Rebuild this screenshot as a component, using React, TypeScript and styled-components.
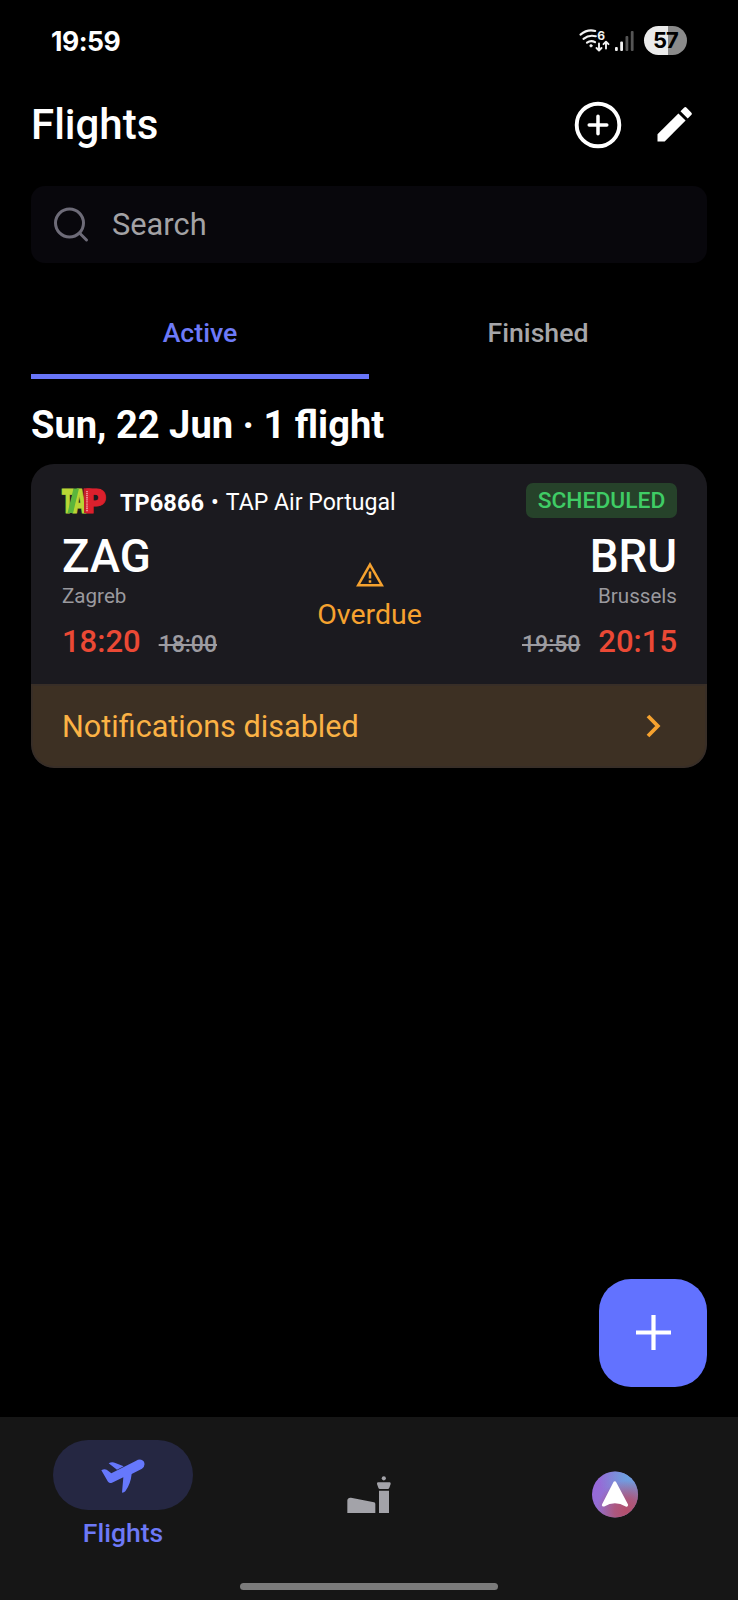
import React from "react";
import styled, { createGlobalStyle } from "styled-components";

const GlobalStyle = createGlobalStyle`
  *, *::before, *::after { box-sizing: border-box; }
  body { margin: 0; background: #000; }
  svg { display: block; flex: none; }
  button { border: 0; padding: 0; background: none; font: inherit; color: inherit; }
`;

const Screen = styled.div`
  position: relative;
  display: flex;
  flex-direction: column;
  width: 738px;
  height: 1600px;
  background: #000;
  color: #fff;
  font-family: Roboto, "Liberation Sans", sans-serif;
  overflow: hidden;
`;

const StatusBar = styled.header`
  display: flex;
  align-items: center;
  justify-content: space-between;
  height: 81px;
  padding: 0 51px 0 51px;
`;

const Clock = styled.time`
  font: 650 26.5px/32px Inter, sans-serif;
  letter-spacing: -0.5px;
`;

const StatusIcons = styled.div`
  display: flex;
  align-items: center;
  gap: 5px;
`;

const Battery = styled.div`
  width: 43px;
  height: 29px;
  margin-left: 5px;
  border-radius: 15px;
  background: linear-gradient(90deg, #ebebeb 0 56%, #8b8b8b 56%);
  color: #000;
  font: 700 22px/29px Inter, sans-serif;
  letter-spacing: -1px;
  text-align: center;
`;

const TitleBar = styled.div`
  display: flex;
  align-items: center;
  justify-content: space-between;
  height: 87px;
  margin-bottom: 18px;
  padding: 0 45px 0 31px;
`;

const Title = styled.h1`
  margin: 0;
  font-size: 42px;
  font-weight: 500;
  line-height: 50px;
`;

const Actions = styled.div`
  display: flex;
  align-items: center;
  gap: 35px;
`;

const SearchBox = styled.div`
  display: flex;
  align-items: center;
  gap: 21px;
  height: 77px;
  margin: 0 31px;
  padding-left: 22px;
  border-radius: 14px;
  background: #08070c;
  color: #a3a2a5;
  font-size: 30.8px;
`;

const Tabs = styled.div`
  display: flex;
  height: 88px;
  margin: 28px 31px 0;
`;

const Tab = styled.button<{ $active?: boolean }>`
  flex: 1;
  border-bottom: 5px solid ${(p) => (p.$active ? "#6875f8" : "transparent")};
  color: ${(p) => (p.$active ? "#6d7af8" : "#a6a6a9")};
  font-size: 26.7px;
  font-weight: 500;
  line-height: 32px;
`;

const DayHeading = styled.h2`
  margin: 7px 31px 0;
  font-size: 38.1px;
  font-weight: 700;
  line-height: 78px;
  white-space: nowrap;
`;

const Card = styled.article`
  margin: 0 31px;
  border-radius: 23px;
  background: #1b1a1f;
  overflow: hidden;
`;

const CardBody = styled.div`
  height: 220px;
  padding: 19px 30px 0 31px;
`;

const AirlineRow = styled.div`
  display: flex;
  height: 35px;
  margin-bottom: 16px;
`;

const Airline = styled.div`
  display: flex;
  flex: 1;
  gap: 7px;
  margin-left: 14px;
  padding-top: 5px;
  font-size: 23.1px;
  line-height: 30px;
  white-space: nowrap;

  b {
    font-size: 23.6px;
  }
`;

const Badge = styled.span`
  width: 151px;
  border-radius: 7px;
  background: #26422a;
  color: #3fcc65;
  font-size: 22.8px;
  font-weight: 500;
  line-height: 36px;
  text-align: center;
`;

const Route = styled.div`
  display: grid;
  grid-template-columns: 1fr 160px 1fr;
`;

const Stop = styled.div<{ $end?: boolean }>`
  display: flex;
  flex-direction: column;
  align-items: ${(p) => (p.$end ? "flex-end" : "flex-start")};
`;

const Code = styled.strong`
  font-size: 45.6px;
  font-weight: 500;
  line-height: 46px;
`;

const City = styled.span`
  margin-top: 1px;
  color: #9a999e;
  font-size: 20.6px;
  line-height: 31px;
`;

const Times = styled.div<{ $end?: boolean }>`
  display: flex;
  flex-direction: ${(p) => (p.$end ? "row-reverse" : "row")};
  align-items: baseline;
  gap: 18px;
  margin-top: 10px;
  line-height: 40px;
`;

const NewTime = styled.span`
  color: #eb4935;
  font-size: 31px;
  font-weight: 500;
`;

const OldTime = styled.s`
  color: #9d9ca1;
  font-size: 23px;
  font-weight: 500;
  text-decoration-thickness: 2px;
`;

const Progress = styled.div`
  display: flex;
  flex-direction: column;
  align-items: center;
  padding-top: 28px;
  color: #f6a22f;
  font-size: 28.5px;
  line-height: 37px;
`;

const WarningSlot = styled.div`
  height: 34px;
`;

const Notice = styled.button`
  display: flex;
  align-items: center;
  justify-content: space-between;
  width: 100%;
  height: 84px;
  padding: 0 44px 0 29px;
  border: 2px solid #382e27;
  border-radius: 0 0 23px 23px;
  background: #3d3023;
  color: #fbb245;
  font-size: 30.6px;
`;

const Fab = styled.button`
  position: absolute;
  right: 31px;
  bottom: 213px;
  display: grid;
  place-items: center;
  width: 108px;
  height: 108px;
  padding-bottom: 1px;
  border-radius: 32px;
  background: #6272ff;
`;

const BottomNav = styled.nav`
  display: flex;
  flex-direction: column;
  align-items: center;
  height: 183px;
  margin-top: auto;
  background: #161616;
`;

const NavItems = styled.div`
  display: grid;
  grid-template-columns: repeat(3, 1fr);
  width: 100%;
  height: 155px;
`;

const NavItem = styled.button`
  display: flex;
  flex-direction: column;
  align-items: center;
  justify-content: center;
  color: #6d79f7;
  font-size: 26.5px;
  font-weight: 500;
  line-height: 36px;
`;

const Pill = styled.span`
  display: grid;
  place-items: center;
  width: 140px;
  height: 70px;
  margin-top: 1px;
  margin-bottom: 5px;
  padding-top: 2px;
  border-radius: 35px;
  background: #252742;
`;

const HomeIndicator = styled.div`
  width: 258px;
  height: 7px;
  margin-top: 11px;
  border-radius: 4px;
  background: #7b7b7b;
`;

const LogoSlot = styled.div`
  height: 44px;
  margin-top: -4px;

  svg {
    overflow: visible;
  }
`;

const WifiIcon = () => (
  <svg width="31" height="26" viewBox="0 0 31 26" fill="none" stroke="#f2f2f2" strokeWidth="2.1" strokeLinecap="round" strokeLinejoin="round">
    <path d="M1.500 6.600Q8.500 .8 16.200 3M4.500 10.800Q10 6.500 16.800 8.300M8 14.600Q12 11.800 16 14.200" />
    <circle cx="12" cy="17.800" r="1.300" fill="#f2f2f2" strokeWidth=".5" />
    <path d="M20 15.500V22M17.500 20l2.500 2.500 2.500-2.500M27 20.500V14M24.500 16.200L27 13.700l2.500 2.500" strokeWidth="1.900" />
    <text x="18.300" y="11.500" fill="#f2f2f2" stroke="none" fontFamily="Inter, sans-serif" fontWeight="700" fontSize="12">6</text>
  </svg>
);

const SignalIcon = () => (
  <svg width="19" height="20" viewBox="0 0 19 20" fill="#f2f2f2">
    <rect x="0" y="16" width="2.800" height="4" rx="1" />
    <rect x="5.200" y="10.500" width="2.800" height="9.500" rx="1" />
    <rect x="10.500" y="5" width="2.800" height="15" rx="1" fill="#555" />
    <rect x="15.800" y="0" width="2.800" height="20" rx="1" fill="#555" />
  </svg>
);

const AddCircleIcon = () => (
  <svg width="48" height="48" viewBox="0 0 48 48" fill="none" stroke="#fff" strokeLinecap="round">
    <circle cx="24" cy="24" r="21.300" strokeWidth="3.900" />
    <path d="M24 15.200v17.600M15.200 24h17.600" strokeWidth="3.500" />
  </svg>
);

const PencilIcon = () => (
  <svg width="36" height="36" viewBox="0 0 36 36" fill="#fff">
    <path d="M.5 34.500v-7.200L21.400 6.400l7.200 7.200L7.700 34.500z" />
    <path d="M23.500 4.300l3.500-3.500a1.800 1.800 0 0 1 2.600 0l4.600 4.600a1.800 1.800 0 0 1 0 2.600L30.700 11.500z" />
  </svg>
);

const SearchIcon = () => (
  <svg width="38" height="38" viewBox="0 0 38 38" fill="none" stroke="#6d6b78" strokeWidth="3" strokeLinecap="round">
    <circle cx="16.500" cy="17" r="14" />
    <path d="M26.500 27l7 7" />
  </svg>
);

const AirlineLogo = () => (
  <LogoSlot>
    <svg width="44" height="44" viewBox="0 0 44 44" fontFamily="Inter, sans-serif" fontWeight="900" fontSize="32.500" strokeWidth="1">
      <rect x="21.500" y="9.500" width="8" height="24.500" fill="#b51f2c" />
      <text x="-.5" y="33.500" textLength="25" lengthAdjust="spacingAndGlyphs" fill="#b9d635" stroke="#b9d635">TA</text>
      <path d="M11.500 9.500h5.500L11 34H5.500z" fill="#5bb53c" />
      <rect x="22" y="9.500" width="6" height="24.500" fill="#c4202c" />
      <text x="23" y="33.500" textLength="21" lengthAdjust="spacingAndGlyphs" fill="#dc202d" stroke="#dc202d">P</text>
      <path d="M25 12v21" stroke="#eeb0b0" strokeWidth="1.500" strokeDasharray="1.200 .7" />
    </svg>
  </LogoSlot>
);

const WarningIcon = () => (
  <svg width="28" height="25" viewBox="0 0 28 25" fill="none" stroke="#f6a22f">
    <path d="M14 2.600L25.800 23.200H2.200z" strokeWidth="2.500" />
    <path d="M14 9.500v7M14 18.200v2.600" strokeWidth="2.500" />
  </svg>
);

const ChevronIcon = () => (
  <svg width="15" height="24" viewBox="0 0 15 24" fill="none" stroke="#f6a22f" strokeWidth="3.800">
    <path d="M2 2l9.800 10L2 22" />
  </svg>
);

const PlusIcon = () => (
  <svg width="35" height="35" viewBox="0 0 35 35" stroke="#fff" strokeWidth="4.200">
    <path d="M17.500 0v35M0 17.500h35" />
  </svg>
);

const PlaneIcon = () => (
  <svg width="44" height="34" viewBox="214 182 132 102" fill="#6678fc">
    <path d="M215 216Q223 211 231 214L245 225 318 188Q333 179 342 189 349 201 337 211L306 227Q303 257 287 279 284 283 277 283L281 237 247 253Q240 256 235 250z" />
    <path d="M237 195Q247 189 257 194L282 204 262 214z" />
  </svg>
);

const AirportIcon = () => (
  <svg width="44" height="37" viewBox="81 78 132 111" fill="#a3a3a9">
    <path d="M82 189V151Q83 142 93 143L162 157Q166 158 166 162V189zM177 122h30v67h-30zM174 97h35q4 0 3 5l-4 11q-1 4-5 4h-23q-4 0-5-4l-4-11q-1-5 3-5z" />
    <circle cx="191.500" cy="85" r="6.200" />
  </svg>
);

const ProfileIcon = () => (
  <svg width="47" height="47" viewBox="0 0 47 47">
    <defs>
      <linearGradient id="base" x1="0" y1=".2" x2="1" y2=".5">
        <stop offset="0" stopColor="#9867dc" />
        <stop offset="1" stopColor="#8a80c0" />
      </linearGradient>
      <radialGradient id="sky" cx=".8" cy=".1" r=".65">
        <stop offset="0" stopColor="#6ba3e2" />
        <stop offset="1" stopColor="#6ba3e2" stopOpacity="0" />
      </radialGradient>
      <radialGradient id="rose" cx=".75" cy=".85" r=".65">
        <stop offset="0" stopColor="#b44f6c" />
        <stop offset=".4" stopColor="#b44f6c" stopOpacity=".8" />
        <stop offset="1" stopColor="#b44f6c" stopOpacity="0" />
      </radialGradient>
    </defs>
    <circle cx="23" cy="23.500" r="23" fill="url(#base)" />
    <circle cx="23" cy="23.500" r="23" fill="url(#sky)" />
    <circle cx="23" cy="23.500" r="23" fill="url(#rose)" />
    <path d="M22.800 12L11.500 34Q22.800 27.500 34.500 34z" fill="#fff" stroke="#fff" strokeWidth="3.200" strokeLinejoin="round" />
  </svg>
);

export default function App() {
  return (
    <Screen>
      <GlobalStyle />
      <StatusBar>
        <Clock>19:59</Clock>
        <StatusIcons>
          <WifiIcon />
          <SignalIcon />
          <Battery>57</Battery>
        </StatusIcons>
      </StatusBar>
      <TitleBar>
        <Title>Flights</Title>
        <Actions>
          <button aria-label="Add flight"><AddCircleIcon /></button>
          <button aria-label="Edit"><PencilIcon /></button>
        </Actions>
      </TitleBar>
      <SearchBox>
        <SearchIcon />
        <span>Search</span>
      </SearchBox>
      <Tabs>
        <Tab $active>Active</Tab>
        <Tab>Finished</Tab>
      </Tabs>
      <DayHeading>Sun, 22 Jun · 1 flight</DayHeading>
      <Card>
        <CardBody>
          <AirlineRow>
            <AirlineLogo />
            <Airline><b>TP6866</b><span>•</span><span>TAP Air Portugal</span></Airline>
            <Badge>SCHEDULED</Badge>
          </AirlineRow>
          <Route>
            <Stop>
              <Code>ZAG</Code>
              <City>Zagreb</City>
              <Times><NewTime>18:20</NewTime><OldTime>18:00</OldTime></Times>
            </Stop>
            <Progress>
              <WarningSlot><WarningIcon /></WarningSlot>
              <span>Overdue</span>
            </Progress>
            <Stop $end>
              <Code>BRU</Code>
              <City>Brussels</City>
              <Times $end><NewTime>20:15</NewTime><OldTime>19:50</OldTime></Times>
            </Stop>
          </Route>
        </CardBody>
        <Notice>
          <span>Notifications disabled</span>
          <ChevronIcon />
        </Notice>
      </Card>
      <Fab aria-label="Add"><PlusIcon /></Fab>
      <BottomNav>
        <NavItems>
          <NavItem>
            <Pill><PlaneIcon /></Pill>
            <span>Flights</span>
          </NavItem>
          <NavItem aria-label="Airports"><AirportIcon /></NavItem>
          <NavItem aria-label="Profile"><ProfileIcon /></NavItem>
        </NavItems>
        <HomeIndicator />
      </BottomNav>
    </Screen>
  );
}
